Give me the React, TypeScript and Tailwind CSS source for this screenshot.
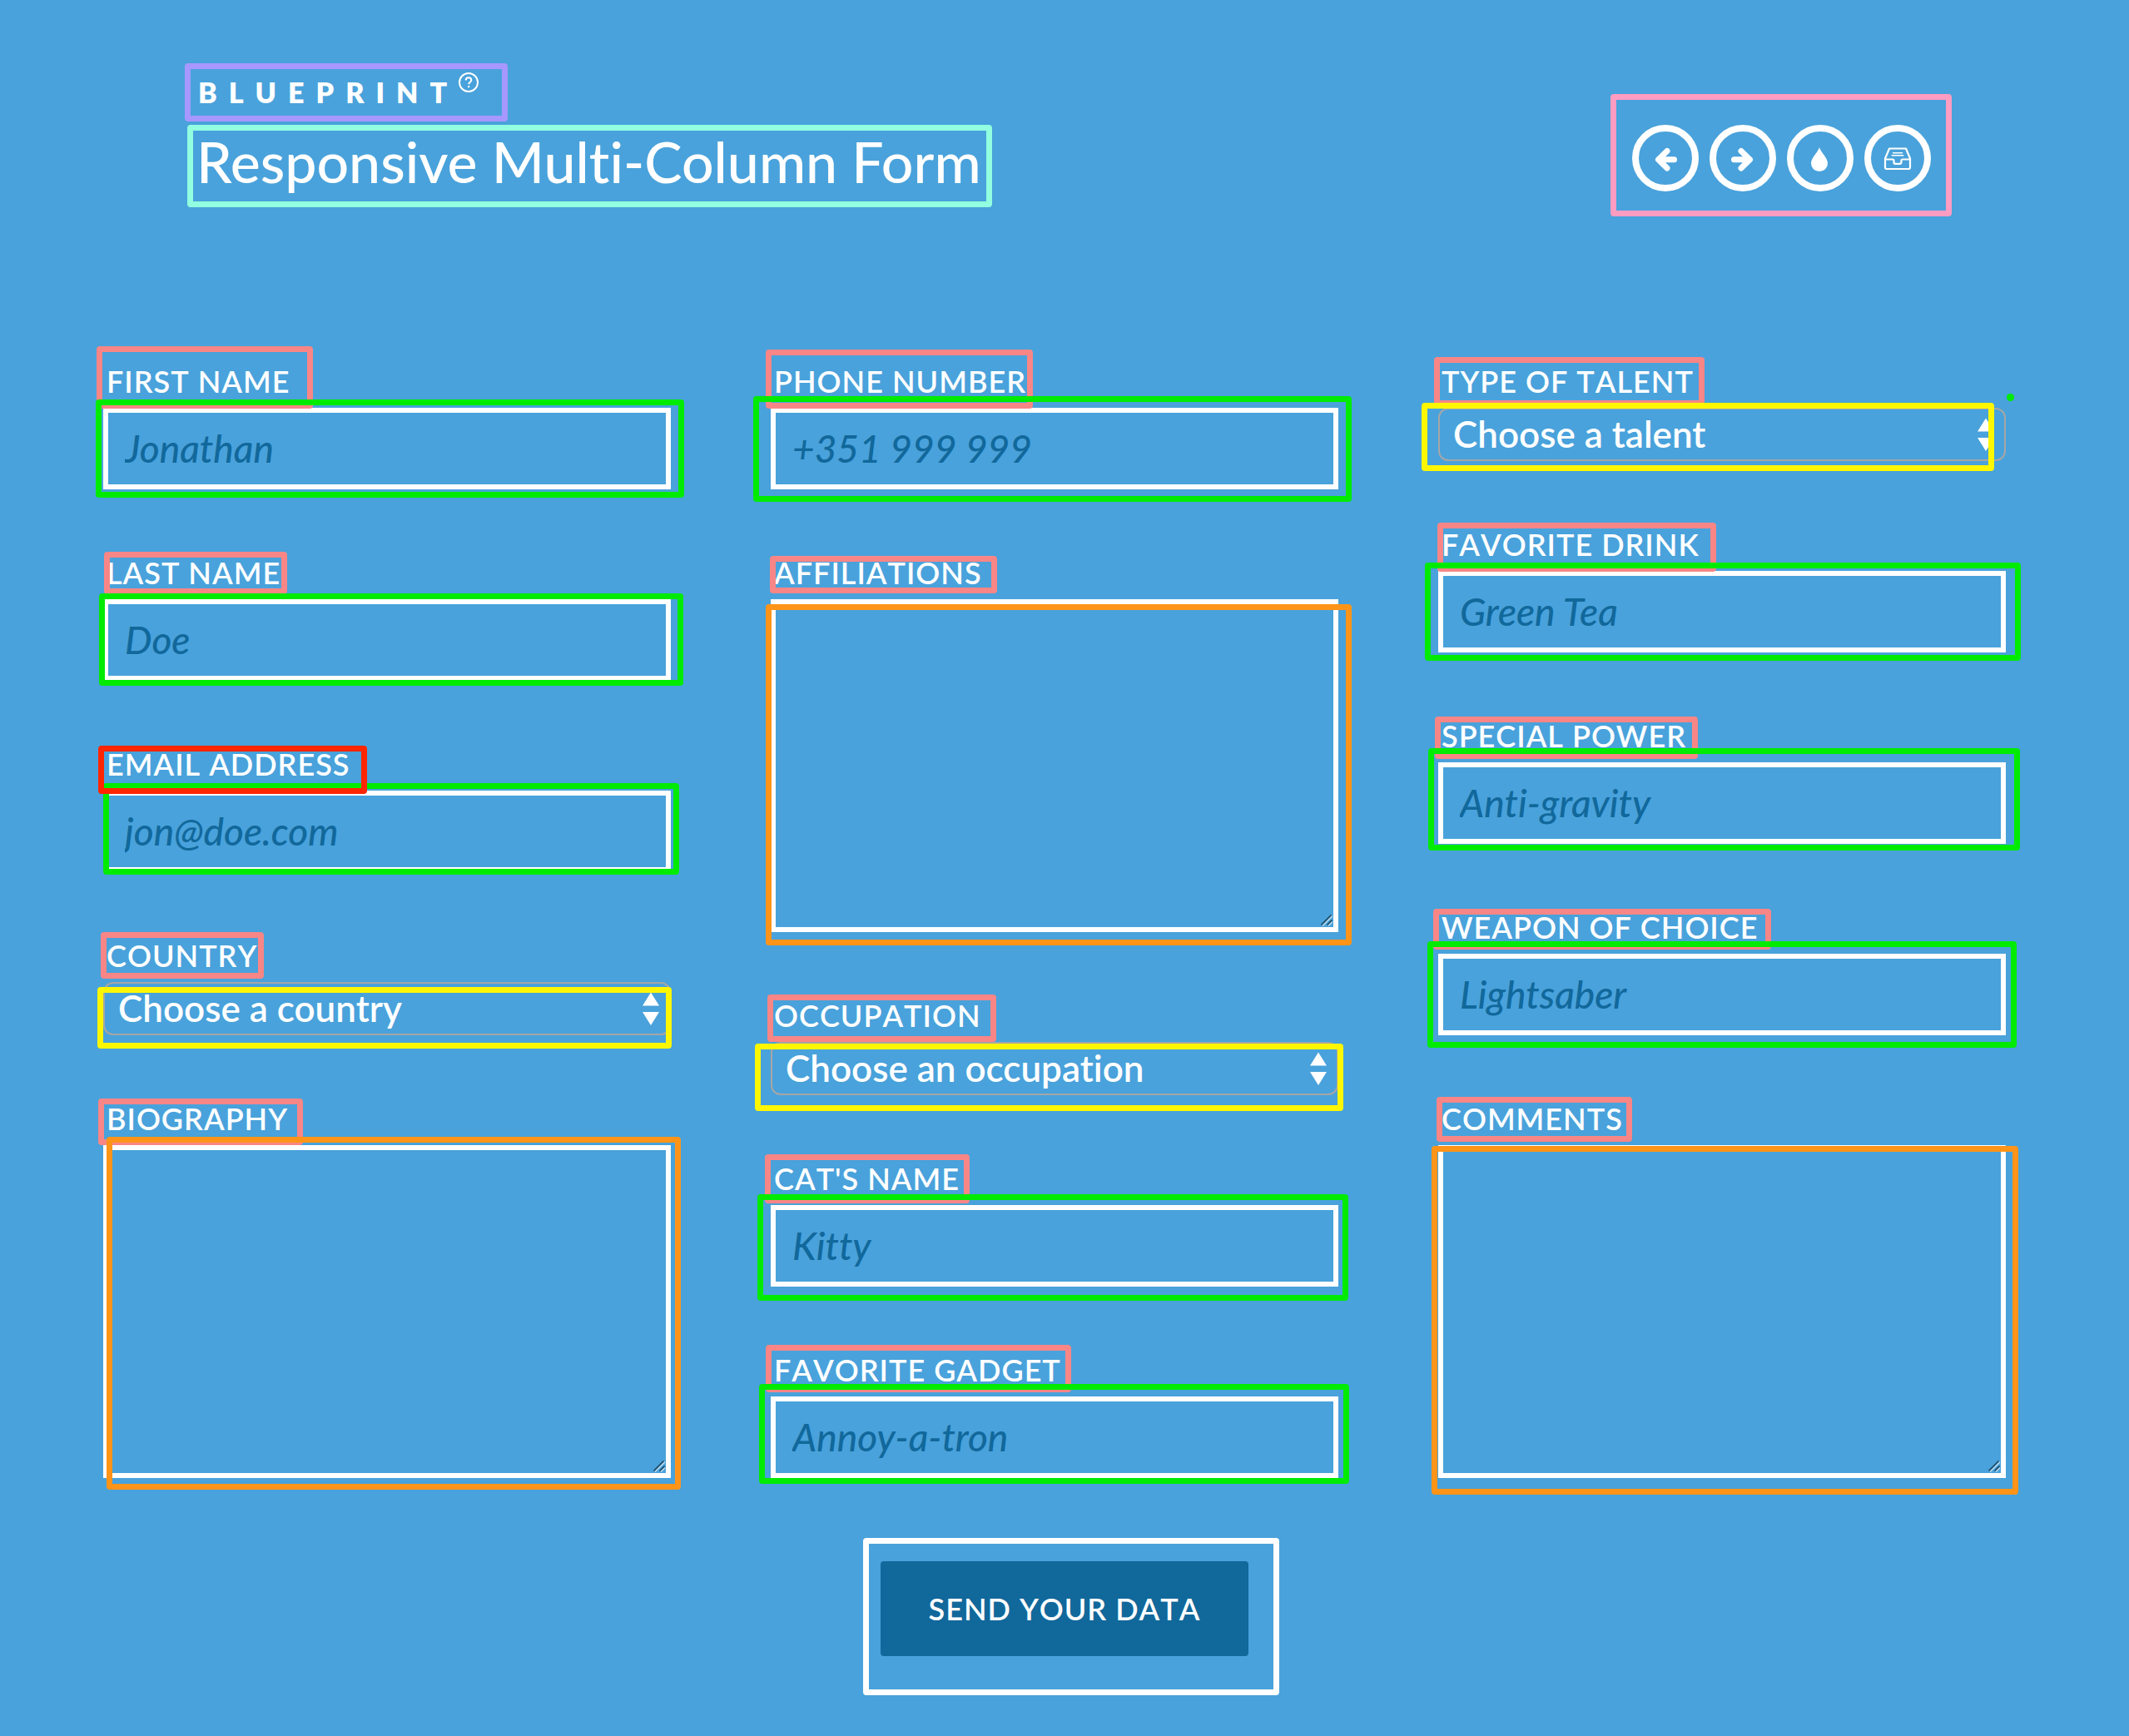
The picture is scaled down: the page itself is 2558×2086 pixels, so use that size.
import React from "react";

type Tone = "salmon" | "red" | "green" | "yellow" | "orange" | "violet" | "mint" | "pink" | "white";

const tones: Record<Tone, string> = {
  salmon: "z-10 border-[#f98686]",
  green: "z-20 border-[#00eb00]",
  yellow: "z-20 border-[#fff700]",
  orange: "z-20 border-[#ff9419]",
  red: "z-30 border-[#ff2600]",
  violet: "border-[#a798ff]",
  mint: "border-[#92ffe0]",
  pink: "border-[#ff9cc1]",
  white: "border-white",
};

function Frame({ tone, at }: { tone: Tone; at: string }) {
  return (
    <span
      aria-hidden="true"
      className={`pointer-events-none absolute rounded-[4px] border-[7px] ${tones[tone]} ${at}`}
    />
  );
}

type FieldSpec = {
  id: string;
  label: string;
  kind: "text" | "email" | "tel" | "select" | "textarea";
  hint?: string;
  labelFrame: string;
  labelTone?: Tone;
  frame: string;
  mark?: boolean;
};

const columns: FieldSpec[][] = [
  [
    {
      id: "first-name", label: "First Name", kind: "text", hint: "Jonathan",
      labelFrame: "-left-2 -top-5 h-[75px] w-[260px]",
      frame: "-left-[9px] -top-[10px] -right-4 -bottom-[10px]",
    },
    {
      id: "last-name", label: "Last Name", kind: "text", hint: "Doe",
      labelFrame: "left-px -top-[3px] h-[51px] w-[220px]",
      frame: "-left-[5px] -top-[7px] -right-[15px] -bottom-[6px]",
    },
    {
      id: "email", label: "Email Address", kind: "email", hint: "jon@doe.com", labelTone: "red",
      labelFrame: "-left-[6px] top-0 h-[58px] w-[323px]",
      frame: "left-0 -top-[9px] -right-[10px] -bottom-[3px]",
    },
    {
      id: "country", label: "Country", kind: "select", hint: "Choose a country",
      labelFrame: "-left-[3px] -top-[6px] h-[56px] w-[196px]",
      frame: "-left-[7px] top-[6px] -right-px -bottom-4",
    },
    {
      id: "biography", label: "Biography", kind: "textarea",
      labelFrame: "-left-[6px] -top-[2px] h-[56px] w-[246px]",
      frame: "left-1 -top-[10px] -right-3 -bottom-[14px]",
    },
  ],
  [
    {
      id: "phone", label: "Phone Number", kind: "tel", hint: "+351 999 999",
      labelFrame: "-left-[6px] -top-4 h-[71px] w-[321px]",
      frame: "-left-[21px] -top-[14px] -right-4 -bottom-[15px]",
    },
    {
      id: "affiliations", label: "Affiliations", kind: "textarea",
      labelFrame: "-left-px top-[2px] h-[45px] w-[273px]",
      frame: "-left-[6px] top-[6px] -right-4 -bottom-4",
    },
    {
      id: "occupation", label: "Occupation", kind: "select", hint: "Choose an occupation",
      labelFrame: "-left-1 -top-[3px] h-[57px] w-[275px]",
      frame: "-left-[19px] top-[2px] -right-[6px] -bottom-[19px]",
    },
    {
      id: "cat", label: "Cat's name", kind: "text", hint: "Kitty",
      labelFrame: "-left-[7px] -top-[7px] h-[59px] w-[246px]",
      frame: "-left-4 -top-[13px] -right-3 -bottom-[17px]",
    },
    {
      id: "gadget", label: "Favorite Gadget", kind: "text", hint: "Annoy-a-tron",
      labelFrame: "-left-[6px] -top-2 h-[57px] w-[367px]",
      frame: "-left-[14px] -top-[15px] -right-[13px] -bottom-[7px]",
    },
  ],
  [
    {
      id: "talent", label: "Type of Talent", kind: "select", hint: "Choose a talent", mark: true,
      labelFrame: "-left-[5px] -top-[7px] h-[59px] w-[325px]",
      frame: "-left-5 -top-[6px] right-[14px] -bottom-3",
    },
    {
      id: "drink", label: "Favorite Drink", kind: "text", hint: "Green Tea",
      labelFrame: "-left-px -top-1 h-[59px] w-[335px]",
      frame: "-left-4 -top-[10px] -right-[18px] -bottom-[10px]",
    },
    {
      id: "power", label: "Special Power", kind: "text", hint: "Anti-gravity",
      labelFrame: "-left-1 -top-px h-[51px] w-[316px]",
      frame: "-left-3 -top-[17px] -right-[17px] -bottom-2",
    },
    {
      id: "weapon", label: "Weapon of Choice", kind: "text", hint: "Lightsaber",
      labelFrame: "-left-[6px] top-0 h-[49px] w-[406px]",
      frame: "-left-[13px] -top-[15px] -right-[13px] -bottom-[15px]",
    },
    {
      id: "comments", label: "Comments", kind: "textarea",
      labelFrame: "-left-[2px] -top-1 h-[54px] w-[235px]",
      frame: "-left-2 top-px -right-[15px] -bottom-5",
    },
  ],
];

function Control({ field }: { field: FieldSpec }) {
  if (field.kind === "textarea") {
    return (
      <>
        <textarea
          id={field.id}
          className="block h-[400px] w-full resize-none border-[6px] border-white bg-transparent px-6 py-4 text-[46px] leading-[56px] outline-none"
        />
        <svg
          aria-hidden="true"
          viewBox="0 0 14 14"
          fill="none"
          strokeWidth="1.600"
          className="pointer-events-none absolute right-[7px] bottom-[7px] size-[14px]"
        >
          <path d="M2 13.500 14 1.500M9 13.500 14 8.500" stroke="#b9d9ee" />
          <path d="M0.500 12.500 12.500 0.500M7.500 12.500 13.500 6.500" stroke="#1f4a66" />
        </svg>
      </>
    );
  }
  if (field.kind === "select") {
    return (
      <>
        <select
          id={field.id}
          className="block h-16 w-full appearance-none rounded-xl border-2 border-[#a6a6a6] bg-transparent px-4 pb-[2px] text-[44px] leading-[54px] font-semibold outline-none"
        >
          <option>{field.hint}</option>
        </select>
        <svg
          aria-hidden="true"
          viewBox="0 0 20 40"
          fill="currentColor"
          className="pointer-events-none absolute top-3 right-[14px] h-10 w-5"
        >
          <path d="M10 0.500 20 16.500H0ZM10 40 0 24H20Z" />
        </svg>
      </>
    );
  }
  return (
    <input
      id={field.id}
      type={field.kind}
      placeholder={field.hint}
      className="block h-[98px] w-full border-[6px] border-white bg-transparent px-5 pb-[2px] text-[46px] leading-[56px] outline-none placeholder:font-medium placeholder:text-[#11689b] placeholder:italic"
    />
  );
}

function Field({ field }: { field: FieldSpec }) {
  return (
    <div className="flex flex-col items-start gap-[10px]">
      <label
        htmlFor={field.id}
        className="relative pl-1 text-4xl leading-[44px] font-semibold tracking-[1px] whitespace-nowrap uppercase [font-kerning:none]"
      >
        {field.label}
        <Frame tone={field.labelTone ?? "salmon"} at={field.labelFrame} />
      </label>
      <div className="relative w-full">
        <Control field={field} />
        <Frame
          tone={field.kind === "select" ? "yellow" : field.kind === "textarea" ? "orange" : "green"}
          at={field.frame}
        />
        {field.mark && (
          <span aria-hidden="true" className="absolute -top-[17px] -right-[10px] size-[9px] rounded-full bg-[#00eb00]" />
        )}
      </div>
    </div>
  );
}

const links = [
  {
    name: "Previous demo",
    icon: (
      <path d="M42 31.500 31.500 41.700 42 52M33 41.700H50.500" stroke="currentColor" strokeWidth="7" strokeLinecap="round" strokeLinejoin="round" fill="none" />
    ),
  },
  {
    name: "Back to the article",
    icon: (
      <path d="M38 31.500 48.500 41.700 38 52M47 41.700H29.500" stroke="currentColor" strokeWidth="7" strokeLinecap="round" strokeLinejoin="round" fill="none" />
    ),
  },
  {
    name: "Drop",
    icon: <path d="M39 27C40.500 33 49 39.500 49 46.300A10 9.700 0 0 1 29 46.300C29 39.500 37.500 33 39 27Z" fill="currentColor" />,
  },
  {
    name: "Archive",
    icon: (
      <g fill="none" stroke="currentColor" strokeWidth="2.200" strokeLinejoin="round" strokeLinecap="round">
        <path d="M30 28.500H50L55 40.500V51Q55 53 53 53H27Q25 53 25 51V40.500Z" />
        <path d="M25 41.500H34.500Q35.500 41.500 35.500 43V45Q35.500 46.800 37.300 46.800H42.600Q44.400 46.800 44.400 45V43Q44.400 41.500 45.400 41.500H55" />
        <path d="M34.500 33.800H45.500M33.200 36.800H46.800" strokeWidth="1.500" />
      </g>
    ),
  },
];

export default function App() {
  return (
    <main className="min-h-screen overflow-hidden bg-[#49a2db] pb-24 font-['Lato',sans-serif] text-white [font-variant-ligatures:none]">
      <header className="flex items-end justify-between pt-[91px] pr-[238px] pl-[236px]">
        <div className="flex flex-col items-start gap-[22px]">
          <div className="relative flex items-start pl-[2px] text-[34px] leading-10 font-extrabold tracking-[14px] uppercase [font-kerning:none]">
            Blueprint
            <a href="#about" aria-label="About Blueprint" className="-mt-1">
              <svg viewBox="0 0 24 24" fill="none" stroke="currentColor" strokeWidth="2" className="size-6">
                <circle cx="12" cy="12" r="11" />
                <path d="M8.700 9.500C8.700 7.500 10.200 6.300 12 6.300S15.300 7.500 15.300 9.300C15.300 11.800 12.200 11.800 12.200 14.300M12.200 16V18.300" />
              </svg>
            </a>
            <Frame tone="violet" at="-left-[14px] -top-[15px] h-[70px] w-[388px]" />
          </div>
          <h1 className="relative text-[68px] leading-[82px] font-medium whitespace-nowrap">
            Responsive Multi-Column Form
            <Frame tone="mint" at="-left-[11px] -top-[3px] h-[99px] w-[967px]" />
          </h1>
        </div>
        <nav className="relative mb-[5px] flex gap-[13px]">
          {links.map((link) => (
            <a key={link.name} href="#demo" aria-label={link.name} className="size-20">
              <svg viewBox="0 0 80 80" className="size-full">
                <circle cx="40" cy="40" r="36" fill="none" stroke="currentColor" strokeWidth="8" />
                {link.icon}
              </svg>
            </a>
          ))}
          <Frame tone="pink" at="-left-[26px] -top-[37px] -right-[25px] -bottom-[30px]" />
        </nav>
      </header>

      <form className="mt-[201px] flex flex-col items-center gap-[100px]">
        <div className="grid w-full grid-cols-3 gap-[120px] pr-[148px] pl-[124px]">
          {columns.map((fields, i) => (
            <div key={i} className="flex flex-col gap-[78px]">
              {fields.map((field) => (
                <Field key={field.id} field={field} />
              ))}
            </div>
          ))}
        </div>
        <div className="relative">
          <button
            type="button"
            className="h-[114px] rounded bg-[#11689b] px-[58px] text-4xl leading-[44px] font-semibold tracking-[1px] uppercase [font-kerning:none]"
          >
            Send your data
          </button>
          <Frame tone="white" at="-left-[21px] -top-7 -right-[37px] -bottom-[47px]" />
        </div>
      </form>
    </main>
  );
}
